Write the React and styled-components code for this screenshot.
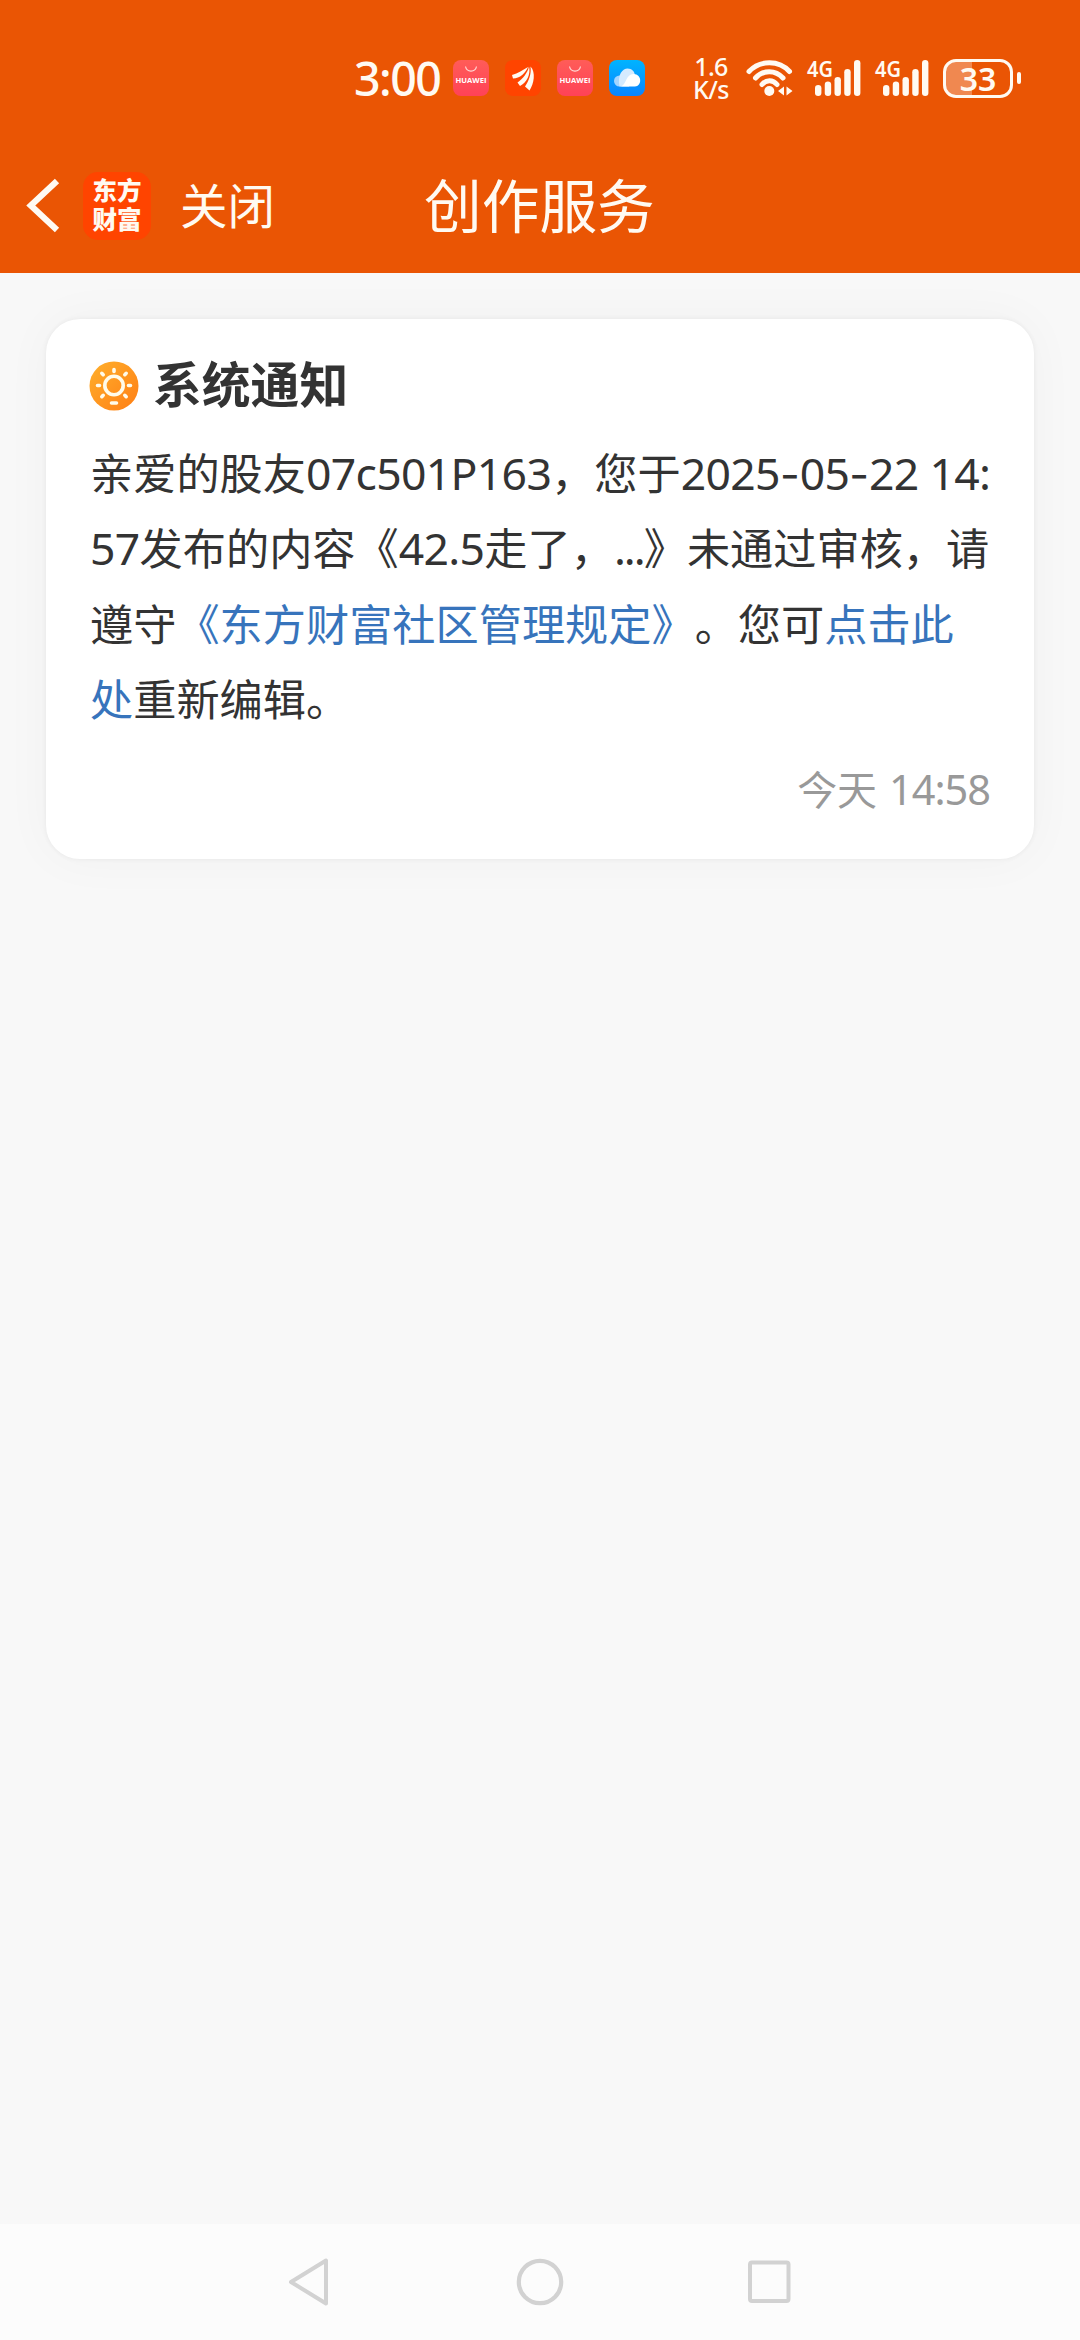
import React from "react";
import styled, { createGlobalStyle } from "styled-components";

const cream = "#fffaf2";
const orange = "#ea5504";

const GlobalStyle = createGlobalStyle`
  * { box-sizing: border-box; }
  body {
    margin: 0;
    background: #f8f8f8;
    font-family: "Noto Sans CJK SC", sans-serif;
    text-spacing-trim: space-all;
  }
  svg { display: block; flex: none; }
`;

const Screen = styled.div`
  width: 1080px;
  height: 2340px;
  display: flex;
  flex-direction: column;
  overflow: hidden;
`;

const TopArea = styled.header`
  height: 272.5px;
  flex: none;
  background: ${orange};
  color: ${cream};
`;

const StatusBar = styled.div`
  height: 156px;
  padding: 0 59px 0 354px;
  display: flex;
  align-items: center;
`;

const Clock = styled.div`
  width: 99px;
  font: 500 46.5px/60px "Noto Sans", sans-serif;
  letter-spacing: -1.5px;
  white-space: nowrap;
`;

const AppIcons = styled.div`
  display: flex;
  gap: 16px;
`;

const AppTile = styled.div`
  width: 36px;
  height: 36px;
  border-radius: 8px;
  background: ${(p) => p.$bg};
  display: flex;
  flex-direction: column;
  align-items: center;
`;

const TileLabel = styled.span`
  font: 700 7.6px/12px "Open Sans", sans-serif;
  color: #fff;
`;

const Speed = styled.div`
  width: 44px;
  margin-left: 44px;
  font: 500 25px/23px "Noto Sans", sans-serif;
  text-align: center;
  letter-spacing: -0.6px;
`;

const Indicators = styled.div`
  margin-left: 13px;
  display: flex;
  align-items: center;
`;

const Signal = styled.svg`
  margin-left: ${(p) => p.$gap}px;
  overflow: visible;
`;

const Battery = styled.div`
  width: 70px;
  height: 39px;
  margin-left: 14px;
  border: 3px solid ${cream};
  border-radius: 13px;
  background: linear-gradient(90deg, #f08850 26px, transparent 26px);
  display: flex;
  align-items: center;
  justify-content: center;
  font: 600 32px/33px "Noto Sans", sans-serif;
`;

const BatteryNub = styled.div`
  width: 4px;
  height: 12px;
  margin-left: 4px;
  border-radius: 2px;
  background: ${cream};
`;

const TitleBar = styled.div`
  height: 100px;
  padding-left: 26px;
  display: grid;
  grid-template-columns: 57px 97px 244px 1fr;
  align-items: center;
`;

const Logo = styled.div`
  width: 68px;
  height: 68px;
  border-radius: 15px;
  background: #ff4400;
  display: flex;
  flex-direction: column;
  align-items: center;
  justify-content: center;
  font-weight: 800;
  font-size: 24.5px;
  line-height: 29px;
  padding-bottom: 4px;
`;

const CloseButton = styled.span`
  font-size: 47.5px;
  line-height: 72px;
  margin-top: -5px;
`;

const PageTitle = styled.h1`
  margin: -7px 0 0;
  font-size: 57.7px;
  font-weight: 400;
  line-height: 84px;
`;

const Content = styled.main`
  flex: 1;
  padding: 46px 46px 0;
`;

const Card = styled.article`
  height: 540.5px;
  padding: 27px 44px 0;
  border-radius: 34px;
  background: #fff;
  color: #333;
  box-shadow: 0 0 5px rgba(0, 0, 0, 0.06), 0 0 50px rgba(0, 0, 0, 0.035);
`;

const CardHeader = styled.div`
  height: 72px;
  display: flex;
  align-items: center;
  gap: 14px;
`;

const CardTitle = styled.h2`
  margin: 0;
  font-size: 48.8px;
  line-height: 72px;
  font-weight: 700;
`;

const SunIcon = styled.svg`
  margin: 8px 0 0 -1px;
`;

const Message = styled.p`
  margin: 16px 0 0;
  font-size: 43.2px;
  line-height: 75.6px;
`;

const Line = styled.span`
  display: block;
  white-space: nowrap;
`;

const Latin = styled.span`
  font-family: "Noto Sans", sans-serif;
  font-size: ${(p) => p.$size || 44.5}px;
  line-height: 1;
  letter-spacing: ${(p) => p.$track ?? -0.67}px;
  margin-left: ${(p) => p.$gap || 0}px;
`;

const Dash = styled.span`
  font-family: Inter, sans-serif;
  font-size: 43px;
  line-height: 1;
`;

const Link = styled.a`
  color: #3774bc;
`;

const Time = styled.div`
  margin-top: 16px;
  color: #999;
  font-size: 40px;
  line-height: 72px;
  text-align: right;
`;

const NavBar = styled.nav`
  height: 116px;
  flex: none;
  background: #fcfcfc;
  display: flex;
  justify-content: center;
  gap: 180px;
  align-items: center;
`;

function HuaweiTile() {
  return (
    <AppTile $bg="linear-gradient(#ff5c58, #ff4257)">
      <svg width="36" height="14" viewBox="0 0 36 14" fill="none" stroke="#ffd8d4" strokeWidth="1.2">
        <path d="M12.5 6.5a5.6 5.6 0 0 0 11 0" />
      </svg>
      <TileLabel>HUAWEI</TileLabel>
    </AppTile>
  );
}

function CellSignal({ gap }) {
  const tops = [25, 21.5, 17, 9, 0];
  return (
    <Signal $gap={gap} width="54" height="38" viewBox="0 0 54 38" fill={cream}>
      {tops.map((top, i) => (
        <rect key={i} x={8 + i * 9.75} y={top + 1} width="6.4" height={36 - top} rx="3.2" />
      ))}
      <text x="0" y="17.5" fontFamily="Noto Sans, sans-serif" fontWeight="600" fontSize="22" textLength="26" lengthAdjust="spacingAndGlyphs">4G</text>
    </Signal>
  );
}

export default function App() {
  return (
    <Screen>
      <GlobalStyle />
      <TopArea>
        <StatusBar>
          <Clock>3:00</Clock>
          <AppIcons>
            <HuaweiTile />
            <AppTile $bg="#ff4400">
              <svg width="36" height="36" viewBox="0 0 36 36" fill={cream}>
                <path d="M7 15C13 13.500 18 10 23 7C20.500 13 15 18.500 8 18.500Z" />
                <path d="M12.500 22.500C18 18.500 22.500 13 24 6.500C26 14 21.500 23 15 26Z" />
                <path d="M20 26.500C24 20.500 26.500 14 25.500 6.500C31 12 29 24 24.500 30.500Z" />
              </svg>
            </AppTile>
            <HuaweiTile />
            <AppTile $bg="linear-gradient(#00b4ff, #0a84ff)">
              <svg width="36" height="36" viewBox="0 0 36 36">
                <circle cx="10.500" cy="21" r="5.500" fill="#a4d4ff" />
                <path d="M10.500 26.500C8 14 14 8.500 18.500 8.500C23 8.500 26 12 26 16L20 26.500Z" fill="#d5ebff" />
                <path d="M12 26.500C17 25 17 14 24.500 14C33.500 14 33 26.500 26 26.500Z" fill="#fff" />
              </svg>
            </AppTile>
          </AppIcons>
          <Speed>
            <div>1.6</div>
            <div>K/s</div>
          </Speed>
          <Indicators>
            <svg width="48" height="38" viewBox="0 0 48 38" fill="none" stroke={cream} strokeWidth="5" strokeLinecap="round">
              <path d="M3 12.500C14 .8 33 .8 43.500 12.500" />
              <path d="M9.500 19C17 10.500 29.500 10.500 37 19" />
              <path d="M16 25.500C20 20.500 27 20.500 31 25.500" />
              <circle cx="23.300" cy="32" r="5" fill={cream} stroke="none" />
              <path d="M38 27.500v9l-6-4.500ZM40.500 27.500v9l6-4.500Z" fill={cream} stroke="none" />
            </svg>
            <CellSignal gap={13} />
            <CellSignal gap={14} />
            <Battery>33</Battery>
            <BatteryNub />
          </Indicators>
        </StatusBar>
        <TitleBar>
          <svg width="36" height="56" viewBox="0 0 36 56" fill="none" stroke={cream} strokeWidth="6.200">
            <path d="M31 3L4.800 27.500L31 52" />
          </svg>
          <Logo>
            <span>东方</span>
            <span>财富</span>
          </Logo>
          <CloseButton>关闭</CloseButton>
          <PageTitle>创作服务</PageTitle>
        </TitleBar>
      </TopArea>
      <Content>
        <Card>
          <CardHeader>
            <SunIcon width="50" height="50" viewBox="0 0 50 50">
              <defs>
                <linearGradient id="sun" x1="0" y1="0" x2="1" y2="1">
                  <stop offset="0" stopColor="#ffb02c" />
                  <stop offset="1" stopColor="#ff7e14" />
                </linearGradient>
              </defs>
              <circle cx="25" cy="25" r="24.500" fill="url(#sun)" />
              <g fill="none" stroke="#fffbea" strokeLinecap="round">
                <circle cx="25" cy="24.500" r="9.200" strokeWidth="3.600" />
                <path strokeWidth="3.600" d="M25 10.500V8.500M35.800 13.700l1.400-1.400M39.500 24.500h2M35.800 34.300l1.400 1.400M14.200 34.300l-1.400 1.400M10.500 24.500h-2M14.200 13.700l-1.400-1.400M22.500 42h5" />
              </g>
            </SunIcon>
            <CardTitle>系统通知</CardTitle>
          </CardHeader>
          <Message>
            <Line>
              亲爱的股友<Latin>07c501P163</Latin>，您于<Latin>2025</Latin><Dash>-</Dash><Latin>05</Latin><Dash>-</Dash><Latin>22 14:</Latin>
            </Line>
            <Line>
              <Latin>57</Latin>发布的内容《<Latin>42.5</Latin>走了，<Latin $track={-2}>...</Latin>》未通过审核，请
            </Line>
            <Line>
              遵守<Link>《东方财富社区管理规定》</Link>。您可<Link>点击此</Link>
            </Line>
            <Line>
              <Link>处</Link>重新编辑。
            </Line>
          </Message>
          <Time>今天<Latin $size={41.5} $track={-1} $gap={2}> 14:58</Latin></Time>
        </Card>
      </Content>
      <NavBar>
        <svg width="50" height="54" viewBox="0 0 50 54" fill="none" stroke="#d2d2d2" strokeWidth="4" strokeLinejoin="round">
          <path d="M41 5.500V48.500L6 27Z" />
        </svg>
        <svg width="50" height="50" viewBox="0 0 50 50" fill="none" stroke="#d2d2d2" strokeWidth="4.200">
          <circle cx="25" cy="25" r="21.200" />
        </svg>
        <svg width="50" height="50" viewBox="0 0 50 50" fill="none" stroke="#d2d2d2" strokeWidth="4">
          <rect x="5" y="5.500" width="38.500" height="38.500" rx="2" />
        </svg>
      </NavBar>
    </Screen>
  );
}
